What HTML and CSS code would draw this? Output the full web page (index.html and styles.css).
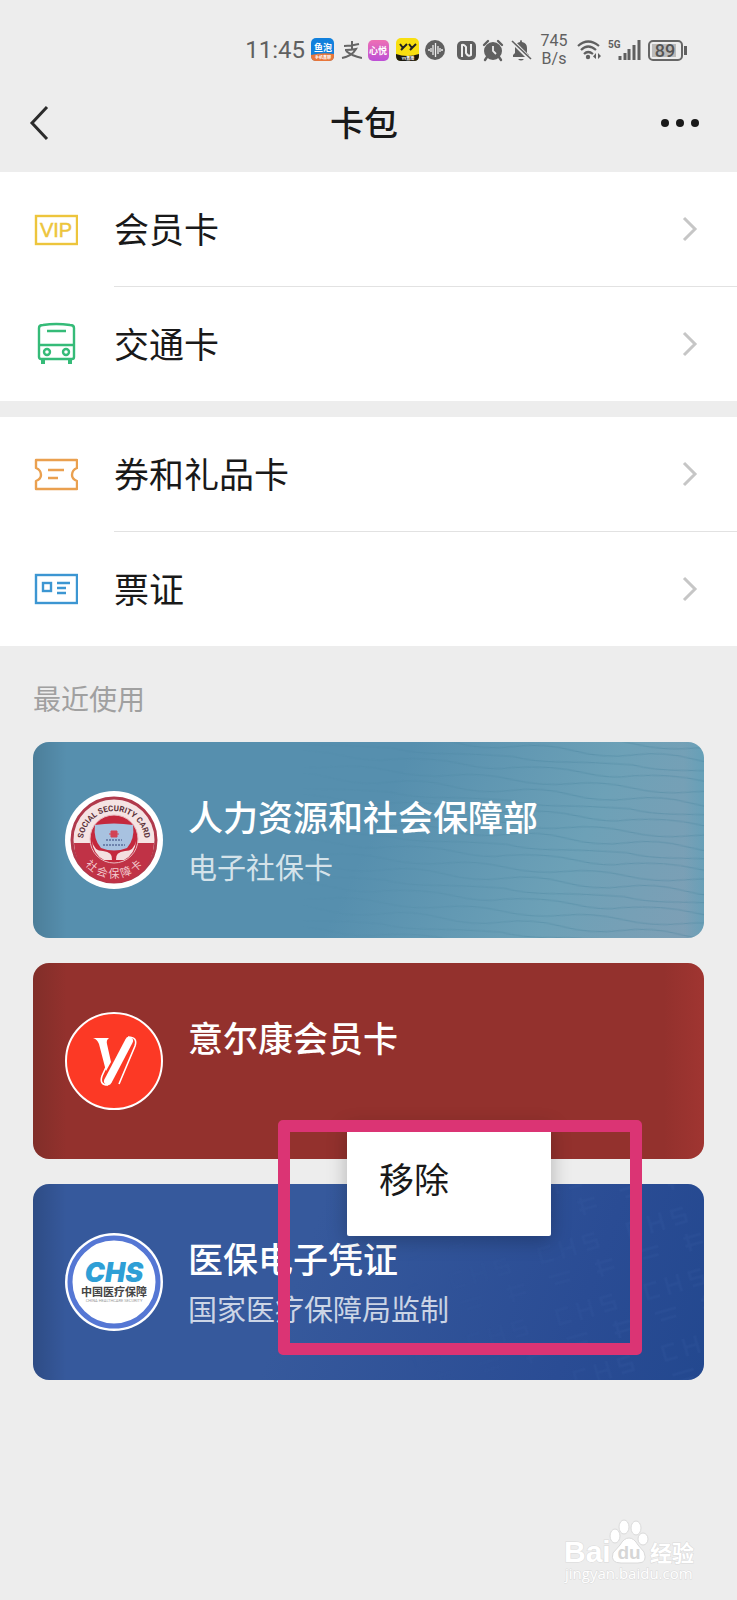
FILE: index.html
```html
<!DOCTYPE html>
<html lang="zh-CN">
<head>
  <meta charset="UTF-8">
  <meta name="viewport" content="width=device-width, initial-scale=1.0">
  <title>卡包</title>
  <link rel="stylesheet" href="styles.css">
</head>
<body>

<div class="status-bar">
  <span class="time">11:45</span>
  <svg width="24" height="24" viewBox="0 0 24 24">
    <rect width="23" height="23" rx="5" fill="#1180dc"/>
    <path d="M0 17 Q12 14 23 16 V18 Q23 23 18 23 H5 Q0 23 0 18z" fill="#e8763a"/>
    <text x="12" y="13" class="app-text" font-size="9">鱼泡</text>
    <text x="12" y="21" class="app-text" font-size="4">手机直聊</text>
  </svg>
  <svg width="21" height="24" viewBox="0 0 21 24">
    <path d="M3 8Q10 8 18 6M11 3V11M4 12Q10 12 15 11Q11 18 1 20M5 13Q11 18 21 20" fill="none" stroke="#666" stroke-width="2"/>
  </svg>
  <svg width="22" height="24" viewBox="0 0 22 24">
    <defs>
      <linearGradient id="pink" x1="0" y1="0" x2="0" y2="1">
        <stop offset="0" stop-color="#ee6fb4"/>
        <stop offset="1" stop-color="#bd4fd6"/>
      </linearGradient>
    </defs>
    <rect y="2" width="21" height="21" rx="5" fill="url(#pink)"/>
    <text x="10" y="16" class="app-text" font-size="9">心悦</text>
  </svg>
  <svg width="23" height="24" viewBox="0 0 23 24">
    <rect width="23" height="23" rx="5" fill="#f8df10"/>
    <path d="M0 16Q11 20 23 16V18Q23 23 18 23H5Q0 23 0 18z" fill="#1d1a10"/>
    <path d="M4 6L7 10L11 6M7 10L5 12M13 6L16 10L20 6M16 10L14 12" fill="none" stroke="#222" stroke-width="2"/>
    <text x="12" y="22" class="app-text" font-size="4">YY直播</text>
  </svg>
  <svg width="21" height="24" viewBox="0 0 21 24">
    <circle cx="10" cy="12" r="10" fill="#606060"/>
    <path d="M3 12H5M6 10V14M8 7V17M10.5 5V19M13 8V16M15 10V14M16 12H18" stroke="#ededed" stroke-width="1.3"/>
  </svg>
  <svg width="24" height="24" viewBox="0 0 24 24">
    <rect x="5" y="3" width="19" height="19" rx="5" fill="#606060"/>
    <path d="M10 19V7Q12 6 14 9V15Q16 19 19 17V6" fill="none" stroke="#ededed" stroke-width="2"/>
  </svg>
  <svg width="22" height="24" viewBox="0 0 22 24">
    <circle cx="11" cy="13" r="9" fill="#606060"/>
    <path d="M2 7L6 3M20 7L16 3M5 19L3 22M17 19L19 22" stroke="#606060" stroke-width="2.4" stroke-linecap="round"/>
    <path d="M11 8V13L14 16" fill="none" stroke="#ededed" stroke-width="1.8"/>
  </svg>
  <svg width="22" height="24" viewBox="0 0 22 24">
    <path d="M3 19V17L5 15V10Q5 5 10 4Q10 2 11 2Q12 2 12 4Q17 5 17 10V15L19 17V19z" fill="#606060"/>
    <path d="M8 21H14Q11 24 8 21z" fill="#606060"/>
    <path d="M2 3L21 22" stroke="#ededed" stroke-width="4"/>
    <path d="M2 3L21 21" stroke="#606060" stroke-width="1.6"/>
  </svg>
  <span class="speed">745<br>B/s</span>
  <svg width="26" height="24" viewBox="0 0 26 24">
    <path d="M2 8Q12 -1 23 8M5 12Q12 5 20 12M8 16Q12 12 17 16" fill="none" stroke="#606060" stroke-width="2.2"/>
    <circle cx="12" cy="19" r="2.2" fill="#606060"/>
    <path d="M20 15V21L17 18.500zM22 15V21L25 18z" fill="#606060"/>
  </svg>
  <svg width="33" height="24" viewBox="0 0 33 24">
    <text x="0" y="10" class="net">5G</text>
    <path d="M12 18V22M17 15V22M21 11V22M26 7V22M31 2V22" stroke="#606060" stroke-width="3"/>
  </svg>
  <svg width="41" height="24" viewBox="0 0 41 24">
    <rect x="2" y="3" width="33" height="19" rx="4" fill="none" stroke="#666" stroke-width="2"/>
    <rect x="5" y="6" width="24" height="13" fill="#bbb"/>
    <path d="M38.500 8V17" stroke="#606060" stroke-width="3"/>
    <text x="18" y="19" class="battery">89</text>
  </svg>
</div>

<header class="nav">
  <button class="nav-btn" aria-label="返回">
    <svg width="22" height="36" viewBox="0 0 22 36">
      <path d="M19 2L4 18L19 34" fill="none" stroke="#2b2b2b" stroke-width="3"/>
    </svg>
  </button>
  <h1>卡包</h1>
  <button class="nav-btn" aria-label="更多">
    <svg width="40" height="10" viewBox="0 0 40 10">
      <circle cx="5" cy="5" r="4" fill="#191919"/>
      <circle cx="20" cy="5" r="4" fill="#191919"/>
      <circle cx="35" cy="5" r="4" fill="#191919"/>
    </svg>
  </button>
</header>

<nav class="menu">
  <a class="row" href="#">
    <svg class="row-icon" viewBox="0 0 44 44" fill="none" stroke="#edc53c" stroke-width="2.4">
      <rect x="2" y="8" width="41" height="28"/>
      <text x="22" y="29" class="vip">VIP</text>
    </svg>
    <span class="row-body">
      <span class="row-label">会员卡</span>
      <svg class="chevron" viewBox="0 0 16 26"><path d="M2 2L13 13L2 24"/></svg>
    </span>
  </a>
  <a class="row" href="#">
    <svg class="row-icon" viewBox="0 0 44 44" fill="none" stroke="#35bb78" stroke-width="2.4">
      <path d="M5 35V6Q5 3 9 3Q22 1 36 3Q40 3 40 6V35Q40 37 38 37H7Q5 37 5 35zM5 23H40M13 9H32"/>
      <path d="M9 38V42M36 38V42" stroke-width="4"/>
      <circle cx="13" cy="30" r="3"/>
      <circle cx="32" cy="30" r="3"/>
    </svg>
    <span class="row-body">
      <span class="row-label">交通卡</span>
      <svg class="chevron" viewBox="0 0 16 26"><path d="M2 2L13 13L2 24"/></svg>
    </span>
  </a>
</nav>

<nav class="menu">
  <a class="row" href="#">
    <svg class="row-icon" viewBox="0 0 44 44" fill="none" stroke="#eaa04f" stroke-width="2.4">
      <path d="M2 7H43V15Q38 17 38 22Q38 26 43 28V36H2V28Q7 26 7 22Q7 17 2 15zM14 17H30M14 25H24" stroke-linejoin="round"/>
    </svg>
    <span class="row-body">
      <span class="row-label">券和礼品卡</span>
      <svg class="chevron" viewBox="0 0 16 26"><path d="M2 2L13 13L2 24"/></svg>
    </span>
  </a>
  <a class="row" href="#">
    <svg class="row-icon" viewBox="0 0 44 44" fill="none" stroke="#3c96d2" stroke-width="2.4">
      <rect x="2" y="8" width="41" height="28"/>
      <rect x="9" y="16" width="8" height="8"/>
      <path d="M23 16H36M23 21H32M23 26H32"/>
    </svg>
    <span class="row-body">
      <span class="row-label">票证</span>
      <svg class="chevron" viewBox="0 0 16 26"><path d="M2 2L13 13L2 24"/></svg>
    </span>
  </a>
</nav>

<main class="recent">
  <h2>最近使用</h2>

  <a class="card card-social" href="#">
    <svg class="card-bg" aria-hidden="true">
      <defs>
        <pattern id="waves" width="120" height="44" patternUnits="userSpaceOnUse" patternTransform="rotate(4)">
          <path d="M0 4Q30 9 60 4T120 4M0 15Q30 9 60 15T120 15M0 25Q20 29 50 27T120 25M0 36Q40 31 70 36T120 36" fill="none" stroke="#3f7d98" stroke-width="1"/>
        </pattern>
        <linearGradient id="fade">
          <stop offset="0.400" stop-color="#fff" stop-opacity="0"/>
          <stop offset="0.800" stop-color="#fff" stop-opacity="0.350"/>
        </linearGradient>
        <mask id="fade-mask"><rect width="100%" height="100%" fill="url(#fade)"/></mask>
      </defs>
      <rect width="100%" height="100%" fill="url(#waves)" mask="url(#fade-mask)"/>
    </svg>
    <svg class="avatar" viewBox="0 0 98 98">
      <defs>
        <path id="arc-top" d="M18 51A31 31 0 1 1 80 51"/>
        <path id="arc-bottom" d="M11 49A38 38 0 0 0 87 49"/>
      </defs>
      <circle cx="49" cy="49" r="49" fill="#fff"/>
      <circle cx="49" cy="49" r="42" fill="#f5e3e3" stroke="#b03a4c" stroke-width="3"/>
      <path d="M9 52H89A40 40 0 0 1 9 52z" fill="#c03246"/>
      <circle cx="49" cy="48" r="24" fill="#c4283d" stroke="#e9bcc2"/>
      <path d="M30 34Q49 31 68 34Q70 48 62 57Q49 62 36 57Q28 48 30 34z" fill="#a8c2e0"/>
      <path d="M46 40H52V46H46zM44 43H54" fill="#d24455" stroke="#d24455"/>
      <path d="M38 54H60M41 49H57" stroke="#5b6f9c" stroke-width="1.500" stroke-dasharray="2 1"/>
      <path d="M27 50Q29 60 38 60Q48 61 47 69H39Q28 63 27 50zM71 50Q69 60 60 60Q50 61 51 69H59Q70 63 71 50z" fill="#f4dfe0"/>
      <text class="seal-en"><textPath href="#arc-top" startOffset="50%">SOCIAL SECURITY CARD</textPath></text>
      <text class="seal-cn"><textPath href="#arc-bottom" startOffset="50%">社 会 保 障 卡</textPath></text>
    </svg>
    <div class="card-text">
      <h3>人力资源和社会保障部</h3>
      <p>电子社保卡</p>
    </div>
  </a>

  <a class="card card-yek" href="#">
    <svg class="avatar" viewBox="0 0 98 98">
      <circle cx="49" cy="49" r="48" fill="#fc3925" stroke="#fff" stroke-width="2"/>
      <path d="M28 26H44Q41 28 42 32L46 50L41 59L34 32Q32 27 28 26z" fill="#fff"/>
      <path d="M64 29L43 69" stroke="#fff" stroke-width="8" stroke-linecap="round"/>
      <path d="M42 53L37 64Q34 73 43 73M63 25Q73 25 70 34L54 72" fill="none" stroke="#fff" stroke-width="1.600"/>
    </svg>
    <div class="card-text">
      <h3>意尔康会员卡</h3>
    </div>
  </a>

  <div class="card-wrap">
    <a class="card card-chs" href="#">
      <svg class="card-bg" aria-hidden="true">
        <defs>
          <pattern id="marks" width="92" height="64" patternUnits="userSpaceOnUse" patternTransform="rotate(-16)">
            <path d="M20 10H8V24H20M30 8V26M30 17H42M42 8V26M66 10H54V17H66V24H54M58 40H76M58 48H76M62 36V54M10 40H32M14 48H30" fill="none" stroke="#5a80c8" stroke-width="3"/>
          </pattern>
          <linearGradient id="fade-chs">
            <stop offset="0.550" stop-color="#fff" stop-opacity="0"/>
            <stop offset="0.900" stop-color="#fff" stop-opacity="0.080"/>
          </linearGradient>
          <mask id="chs-mask"><rect width="100%" height="100%" fill="url(#fade-chs)"/></mask>
        </defs>
        <rect width="100%" height="100%" fill="url(#marks)" mask="url(#chs-mask)"/>
      </svg>
      <svg class="avatar" viewBox="0 0 98 98">
        <circle cx="49" cy="49" r="49" fill="#fff"/>
        <circle cx="49" cy="49" r="44" fill="#fff" stroke="#5577d4" stroke-width="5"/>
        <text x="49" y="49" class="chs-logo">CHS</text>
        <text x="49" y="63" class="chs-cn">中国医疗保障</text>
        <text x="49" y="69" class="chs-en">CHINA HEALTHCARE SECURITY</text>
      </svg>
      <div class="card-text">
        <h3>医保电子凭证</h3>
        <p>国家医疗保障局监制</p>
      </div>
    </a>
    <button class="popup">移除</button>
    <div class="highlight"></div>
  </div>
</main>

<footer class="watermark">
  <svg width="140" height="70" viewBox="0 0 140 70">
    <text x="0" y="44" class="wm-brand">Bai</text>
    <g fill="#fff" stroke="#dadada">
      <ellipse cx="51" cy="18" rx="5" ry="7"/>
      <ellipse cx="60" cy="9" rx="5" ry="7"/>
      <ellipse cx="72" cy="10" rx="5" ry="7"/>
      <ellipse cx="79" cy="21" rx="5" ry="6"/>
      <path d="M65 20Q70 20 74 27L80 34Q84 45 74 45H57Q46 45 49 35L56 27Q60 20 65 20z"/>
    </g>
    <text x="65" y="41" class="wm-du">du</text>
    <text x="86" y="43" class="wm-cn">经验</text>
    <text x="1" y="61" class="wm-url">jingyan.baidu.com</text>
  </svg>
</footer>

</body>
</html>
```
FILE: styles.css
```css
* {
  box-sizing: border-box;
}

body {
  margin: 0;
  min-height: 100vh;
  display: flex;
  flex-direction: column;
  background-color: #ededed;
  color: #191919;
  font-family: "Noto Sans CJK SC", sans-serif;
}

a {
  color: inherit;
  text-decoration: none;
}

button {
  border: 0;
  padding: 0;
  background: none;
  color: inherit;
  font-family: inherit;
}

svg {
  display: block;
  flex-shrink: 0;
}

h1, h2, h3, p {
  margin: 0;
}

/* status bar */
.status-bar {
  height: 76px;
  padding: 24px 49px 0 0;
  display: flex;
  align-items: center;
  justify-content: flex-end;
  gap: 6px;
  color: #606060;
  font-family: Roboto, sans-serif;
}

.time {
  font-size: 24px;
}

.speed {
  width: 32px;
  font-size: 16px;
  line-height: 18px;
  text-align: center;
}

.app-text {
  fill: #fff;
  font-family: "Noto Sans CJK SC", sans-serif;
  font-weight: bold;
  text-anchor: middle;
}

.net {
  fill: #606060;
  font-size: 10px;
  font-weight: bold;
}

.battery {
  fill: #555;
  font-size: 18px;
  font-weight: 500;
  text-anchor: middle;
}

/* title bar */
.nav {
  height: 96px;
  padding: 0 37px 2px 28px;
  display: flex;
  align-items: center;
  justify-content: space-between;
}

.nav-btn {
  width: 40px;
}

.nav h1 {
  padding-bottom: 2px;
  font-size: 34px;
  font-weight: 500;
  line-height: 50px;
}

/* menu */
.menu {
  background-color: #fff;
}

.menu + .menu {
  margin-top: 16px;
}

.row {
  display: flex;
  align-items: center;
  gap: 36px;
  padding-left: 34px;
}

.row-icon {
  width: 44px;
  height: 44px;
}

.row-body {
  flex: 1;
  height: 115px;
  padding-right: 39px;
  display: flex;
  align-items: center;
  justify-content: space-between;
  border-bottom: 1px solid #e2e2e2;
}

.row:last-child .row-body {
  height: 114px;
  border-bottom: 0;
}

.row-label {
  padding-bottom: 3px;
  font-size: 35px;
  line-height: 50px;
}

.vip {
  fill: #edc53c;
  stroke: #edc53c;
  stroke-width: 0.5px;
  font-family: "Liberation Sans", sans-serif;
  font-size: 20px;
  text-anchor: middle;
}

.chevron {
  width: 16px;
  height: 26px;
  fill: none;
  stroke: #c6c6c6;
  stroke-width: 3;
}

/* recent cards */
.recent {
  padding: 32px 33px 0;
}

.recent h2 {
  margin-bottom: 24px;
  color: #a0a0a0;
  font-size: 28px;
  font-weight: normal;
  line-height: 40px;
}

.card {
  position: relative;
  min-height: 196px;
  margin-bottom: 25px;
  padding: 0 32px;
  display: flex;
  align-items: center;
  gap: 25px;
  border-radius: 16px;
  overflow: hidden;
  color: #fff;
}

.card-social {
  background: linear-gradient(90deg, rgba(0, 0, 0, 0.12), transparent 5%, transparent 97%, rgba(90, 160, 185, 0.6)), linear-gradient(115deg, #568fae 50%, #6da1b7 78%, #809fb5 100%);
}

.card-yek {
  background: linear-gradient(90deg, #812e29, #93312d 5%, #93312d 94%, #a03531);
}

.card-chs {
  background: linear-gradient(90deg, rgba(0, 0, 0, 0.15), transparent 5%), linear-gradient(110deg, #36599c 40%, #2a4c94 80%, #23488f);
}

.card-bg {
  position: absolute;
  top: 0;
  left: 0;
  width: 100%;
  height: 100%;
}

.avatar {
  position: relative;
  width: 98px;
  height: 98px;
}

.card-text {
  position: relative;
  align-self: flex-start;
  padding-top: 49px;
}

.card-text h3 {
  font-size: 35px;
  font-weight: 500;
  line-height: 50px;
}

.card-text p {
  color: rgba(255, 255, 255, 0.75);
  font-size: 29px;
  line-height: 50px;
}

.seal-en {
  fill: #5a3038;
  font-family: Roboto, sans-serif;
  font-size: 8px;
  font-weight: bold;
  text-anchor: middle;
}

.seal-cn {
  fill: #f3ccd0;
  font-size: 11px;
  text-anchor: middle;
}

.chs-logo {
  fill: #2f9fd6;
  font-family: Inter, sans-serif;
  font-size: 27px;
  font-style: italic;
  font-weight: 900;
  text-anchor: middle;
}

.chs-cn {
  fill: #444;
  font-size: 11px;
  font-weight: bold;
  text-anchor: middle;
}

.chs-en {
  fill: #999;
  font-family: Roboto, sans-serif;
  font-size: 4px;
  text-anchor: middle;
}

.card-wrap {
  position: relative;
}

/* context menu over the last card */
.popup {
  position: absolute;
  top: -60px;
  left: 314px;
  width: 204px;
  height: 112px;
  padding: 0 0 6px 32px;
  background-color: #fff;
  border-radius: 2px;
  box-shadow: 0 4px 20px rgba(0, 0, 0, 0.25);
  font-size: 35px;
  text-align: left;
}

.highlight {
  position: absolute;
  top: -64px;
  left: 245px;
  width: 364px;
  height: 235px;
  border: 12px solid #db3474;
  border-radius: 5px;
  pointer-events: none;
}

/* watermark */
.watermark {
  margin-top: auto;
  padding: 0 33px 12px;
  display: flex;
  justify-content: flex-end;
}

.watermark text {
  fill: #fff;
  stroke: #dadada;
  stroke-width: 1px;
  paint-order: stroke;
}

.watermark .wm-brand {
  font-family: "Liberation Sans", sans-serif;
  font-size: 30px;
  font-weight: bold;
}

.watermark .wm-du {
  fill: #d6d6d6;
  stroke: none;
  font-family: "Liberation Sans", sans-serif;
  font-size: 19px;
  font-weight: bold;
  text-anchor: middle;
}

.watermark .wm-cn {
  font-size: 22px;
  font-weight: bold;
}

.watermark .wm-url {
  font-family: "Open Sans", sans-serif;
  font-size: 15px;
}
```
